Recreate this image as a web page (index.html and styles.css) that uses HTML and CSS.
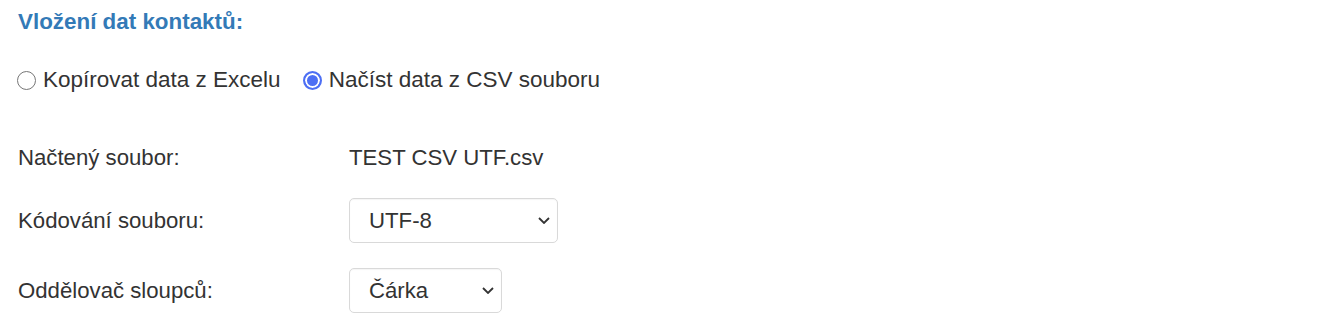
FILE: index.html
```html
<!DOCTYPE html>
<html lang="cs">

<head>
    <meta charset="utf-8">
    <title>Vložení dat kontaktů</title>
    <link rel="stylesheet" href="styles.css">
</head>

<body>
    <div class="import-box">
        <h3 class="import-title">Vložení dat kontaktů:</h3>

        <div class="source-choice">
            <label class="radio-option">
                <input type="radio" name="source" value="excel">
                <span>Kopírovat data z Excelu</span>
            </label>
            <label class="radio-option">
                <input type="radio" name="source" value="csv" checked>
                <span>Načíst data z CSV souboru</span>
            </label>
        </div>

        <!-- csv settings -->
        <div class="csv-form">
            <div class="form-row file-row">
                <div class="form-label">Načtený soubor:</div>
                <div class="form-value">TEST CSV UTF.csv</div>
            </div>
            <div class="form-row">
                <div class="form-label">Kódování souboru:</div>
                <div class="select-wrap encoding">
                    <select class="form-select">
                        <option>UTF-8</option>
                        <option>Windows-1250</option>
                        <option>ISO-8859-2</option>
                    </select>
                    <svg class="chevron" width="12" height="7" viewBox="0 0 12 7">
                        <path d="M1 1 L6 6 L11 1" fill="none" stroke="#333" stroke-width="1.8" />
                    </svg>
                </div>
            </div>
            <div class="form-row">
                <div class="form-label">Oddělovač sloupců:</div>
                <div class="select-wrap separator">
                    <select class="form-select">
                        <option>Čárka</option>
                        <option>Středník</option>
                        <option>Tabulátor</option>
                    </select>
                    <svg class="chevron" width="12" height="7" viewBox="0 0 12 7">
                        <path d="M1 1 L6 6 L11 1" fill="none" stroke="#333" stroke-width="1.8" />
                    </svg>
                </div>
            </div>
        </div>
    </div>
</body>

</html>
```

FILE: styles.css
```css
body {
    margin: 0;
    padding: 0;
    background: #fff;
    color: #333;
    font-family: "Liberation Sans", Arial, sans-serif;
    font-size: 22.2px;
}

.import-box {
    padding: 10px 18px;
}

.import-title {
    margin: 0;
    font-size: 22.4px;
    line-height: 24px;
    font-weight: bold;
    color: #337ab7;
}

/* radio buttons */
.source-choice {
    display: flex;
    gap: 23px;
    margin-top: 34px;
    height: 24px;
    align-items: center;
    font-size: 22.5px;
}

.radio-option {
    display: flex;
    align-items: center;
    gap: 7px;
    cursor: pointer;
}

.radio-option input {
    appearance: none;
    -webkit-appearance: none;
    margin: 0 0 0 -1px;
    width: 19px;
    height: 19px;
    border: 1px solid #767676;
    border-radius: 50%;
    background: #fff;
    box-sizing: border-box;
}

.radio-option input:checked {
    border: 2px solid #4d6ff4;
    box-shadow: inset 0 0 0 2px #fff;
    background: #4d6ff4;
}

/* form */
.csv-form {
    margin-top: 51px;
}

.form-row {
    display: flex;
    align-items: center;
    margin-bottom: 25px;
}

.file-row {
    height: 30px;
}

.form-label {
    width: 331px;
    flex-shrink: 0;
}

.select-wrap {
    position: relative;
}

.select-wrap.encoding {
    width: 209px;
}

.select-wrap.separator {
    width: 153px;
}

.form-select {
    appearance: none;
    -webkit-appearance: none;
    width: 100%;
    height: 45px;
    padding: 0 30px 0 19px;
    border: 1px solid #d9d9d9;
    border-radius: 5px;
    background: #fff;
    color: #333;
    font-family: "Liberation Sans", Arial, sans-serif;
    font-size: 22.2px;
    box-shadow: inset 0 1px 1px rgba(0, 0, 0, 0.04);
}

.chevron {
    position: absolute;
    right: 8px;
    top: 19px;
    pointer-events: none;
}
```
